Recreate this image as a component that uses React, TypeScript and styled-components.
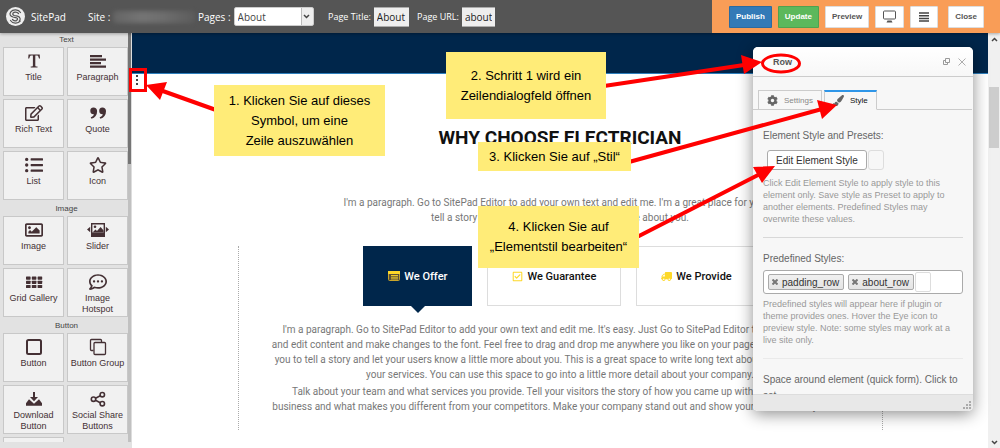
import React from "react";
import styled, { createGlobalStyle, css } from "styled-components";
import {
  FaRegEdit,
  FaListUl,
  FaRegStar,
  FaRegImage,
  FaRegCommentDots,
  FaCog,
  FaPaintBrush,
  FaRegCheckSquare,
  FaTruck,
} from "react-icons/fa";

const GlobalStyle = createGlobalStyle`
  *, *::before, *::after { box-sizing: border-box; }
  body { margin: 0; font-family: "Liberation Sans", Arial, sans-serif; }
  button, input, select { font: inherit; margin: 0; }
  h1, h2, h3, p, ul { margin: 0; padding: 0; font-weight: inherit; font-size: inherit; }
`;

const Shell = styled.div`
  position: relative;
  display: flex;
  flex-direction: column;
  height: 100vh;
  overflow: hidden;
  background: #fff;
`;

/* ---------- top bar ---------- */

const TopBar = styled.header`
  display: flex;
  flex: none;
  height: 33px;
  background: #555;
  color: #fff;
  font-family: "Open Sans", sans-serif;
  font-size: 10px;
  z-index: 1;
  box-shadow: 0 1px 3px rgba(0, 0, 0, 0.3);
`;

const Brand = styled.a`
  display: flex;
  align-items: center;
  gap: 6px;
  width: 88px;
  padding-left: 6px;
  color: inherit;
  text-decoration: none;
`;

const Group = styled.div<{ $width?: number }>`
  display: flex;
  align-items: center;
  gap: 3px;
  flex: none;
  width: ${(p) => (p.$width ? p.$width + "px" : "auto")};
`;

const Redacted = styled.span`
  width: 82px;
  height: 12px;
  border-radius: 4px;
  background: linear-gradient(90deg, #656565, #747474 35%, #6e6e6e 60%, #5c5c5c);
  filter: blur(2px);
`;

const PageSelect = styled.div`
  position: relative;
  display: flex;
  height: 19px;
  width: 80px;

  select {
    flex: 1;
    appearance: none;
    border: 1px solid #ccc;
    border-radius: 2px;
    background: linear-gradient(90deg, #fff 66px, #bbb 66px, #bbb 67px, #eee 67px);
    color: #444;
    padding: 0 3px;
  }
  svg {
    position: absolute;
    right: 4px;
    top: 7px;
    pointer-events: none;
  }
`;

const FieldLabel = styled.label`
  font-size: 9px;
`;

const TextField = styled.input<{ $width: number }>`
  width: ${(p) => p.$width}px;
  height: 20px;
  padding: 0 3px;
  border: 1px solid #aaa;
  border-width: 1px 0;
  background: #eee;
  color: #222;
`;

const Spacer = styled.div`
  flex: 1;
`;

const Actions = styled.div`
  display: flex;
  align-items: center;
  gap: 6px;
  padding: 0 16px 0 17px;
  background: #f99d57;
  font-family: "Liberation Sans", Arial, sans-serif;
`;

const ActionButton = styled.button<{ $bg?: string; $apart?: boolean }>`
  display: flex;
  align-items: center;
  justify-content: center;
  height: 22px;
  padding: 0 6px;
  border: 1px solid ${(p) => (p.$bg ? "rgba(0,0,0,0.12)" : "#ddd")};
  background: ${(p) => p.$bg || "#fff"};
  color: ${(p) => (p.$bg ? "#fff" : "#555")};
  border-radius: 1px;
  font-size: 8px;
  font-weight: bold;
  ${(p) =>
    p.$apart &&
    css`
      margin-left: 4px;
    `}
`;

/* ---------- sidebar ---------- */

const Body = styled.div`
  display: flex;
  flex: 1;
  min-height: 0;
`;

const Sidebar = styled.nav`
  display: flex;
  flex: none;
  width: 132px;
  padding-bottom: 6px;
  background: #e2e2e2;
`;

const Palette = styled.div`
  flex: 1;
  overflow: hidden;
`;

const Section = styled.section`
  padding-left: 3px;
`;

const SectionTitle = styled.h2<{ $first?: boolean }>`
  height: ${(p) => (p.$first ? 14 : 16)}px;
  line-height: ${(p) => (p.$first ? 14 : 18)}px;
  padding-left: 2px;
  text-align: center;
  font-size: 8px;
  color: #444;
`;

const Tiles = styled.div`
  display: grid;
  grid-template-columns: 1fr 1fr;
  gap: 3px;
`;

const Tile = styled.button`
  display: flex;
  flex-direction: column;
  align-items: center;
  height: 49px;
  padding: 4px 0 0;
  border: 1px solid #c8c8c8;
  background: #f1f1f1;
  color: #443034;
  font-size: 9px;
  line-height: 11px;
  white-space: pre-line;

  svg {
    width: 18px;
    height: 18px;
    margin-bottom: 2px;
    flex: none;
  }
`;

const ThinScroll = styled.div`
  flex: none;
  width: 4px;
  background: #c1c1c1;
  border-right: 1px solid #ddd;

  &::before {
    content: "";
    display: block;
    height: 131px;
    background: #757575;
  }
`;

/* ---------- canvas ---------- */

const Canvas = styled.main`
  flex: 1;
  min-width: 0;
  overflow: hidden;
  font-family: Roboto, sans-serif;
  font-size: 10px;
  line-height: 15px;
  color: #777;
  text-align: center;
`;

const Hero = styled.div`
  height: 41px;
  background: #00264b;
  border-bottom: 1px solid #2d7fbd;
`;

const Headline = styled.h1`
  padding-top: 52px;
  font-size: 19px;
  line-height: 24px;
  font-weight: bold;
  color: #111;
`;

const Intro = styled.p`
  padding: 45px 0 21px;
  white-space: pre-line;
`;

const RowFrame = styled.section`
  width: 645px;
  height: 184px;
  margin: 0 auto;
  border: dotted #aaa;
  border-width: 0 1px;
  white-space: pre;
`;

const OfferTabs = styled.div`
  display: flex;
  justify-content: center;
  gap: 15px;
  margin-bottom: 16px;
`;

const OfferTab = styled.button<{ $active?: boolean }>`
  position: relative;
  display: flex;
  align-items: center;
  justify-content: center;
  gap: 4px;
  height: 60px;
  padding: 0 24px;
  border: 1px solid ${(p) => (p.$active ? "#00264b" : "#ddd")};
  background: ${(p) => (p.$active ? "#00264b" : "#fff")};
  color: ${(p) => (p.$active ? "#fff" : "#111")};
  font-size: 11px;
  font-weight: 500;

  svg {
    color: #fdd829;
  }
  ${(p) =>
    p.$active &&
    css`
      &::after {
        content: "";
        position: absolute;
        top: 100%;
        left: 50%;
        margin-left: -8px;
        border: 8px solid transparent;
        border-top-color: #00264b;
        border-bottom: 0;
      }
    `}
`;

const FlippedTruck = styled(FaTruck)`
  transform: scaleX(-1);
`;

const Copy = styled.p`
  margin-bottom: 2px;
`;

const PageScroll = styled.div`
  display: flex;
  flex-direction: column;
  align-items: center;
  flex: none;
  width: 12px;
  padding: 4px 0 3px;
  background: #f0f0f0;
`;

const PageThumb = styled.div`
  width: 10px;
  height: 61px;
  margin: 45px 0 auto;
  background: #cdcdcd;
`;

/* ---------- dialog ---------- */

const DialogFrame = styled.section`
  position: absolute;
  top: 47px;
  right: 27px;
  width: 220px;
  border-radius: 5px;
  box-shadow: 0 3px 16px rgba(0, 0, 0, 0.45);
`;

const Dialog = styled.div`
  height: 364px;
  display: flex;
  flex-direction: column;
  overflow: hidden;
  border-radius: 5px;
  background: #f7f7f7;
  color: #666;
  font-size: 10px;
`;

const DialogHead = styled.header`
  display: flex;
  align-items: center;
  flex: none;
  gap: 8px;
  height: 30px;
  padding: 0 7px 0 20px;
  border-bottom: 1px solid #ccc;
  background: linear-gradient(#fff, #f7f7f7);

  h2 {
    flex: 1;
    font-size: 9px;
    font-weight: bold;
    color: #555;
  }
`;

const PlainButton = styled.button`
  display: flex;
  padding: 0;
  border: 0;
  background: none;
  color: #999;
`;

const DialogTabs = styled.div`
  display: flex;
  flex: none;
  gap: 2px;
  margin: 13px 1px 0 0;
  padding-left: 5px;
  border-bottom: 1px solid #ccc;
`;

const DialogTab = styled.button<{ $active?: boolean }>`
  display: flex;
  align-items: center;
  gap: 6px;
  height: 20px;
  margin-bottom: -1px;
  padding: 0 8px;
  border: 1px solid #ccc;
  border-top: ${(p) => (p.$active ? "2px solid #2f96e8" : "1px solid #ccc")};
  border-bottom-color: ${(p) => (p.$active ? "#f7f7f7" : "#ccc")};
  background: #f7f7f7;
  color: ${(p) => (p.$active ? "#111" : "#888")};
  font-size: 8px;
  white-space: nowrap;

  svg {
    color: #666;
  }
`;

const DialogBody = styled.div`
  flex: 1;
  min-height: 0;
  overflow: hidden;
  padding: 20px 10px 0;
`;

const Caption = styled.label`
  display: block;
  line-height: 12px;
`;

const LooseCaption = styled.p`
  line-height: 16px;
`;

const Help = styled.p<{ $tight?: boolean }>`
  padding: ${(p) => (p.$tight ? 4 : 7)}px 0 12px;
  border-bottom: 1px solid ${(p) => (p.$tight ? "#eaeaea" : "#d8d8d8")};
  margin-bottom: ${(p) => (p.$tight ? 13 : 15)}px;
  color: #999;
  font-size: 9px;
  line-height: 12px;
  white-space: pre;
`;

const StyleLine = styled.div`
  display: flex;
  gap: 1px;
  padding: 8px 0 0 4px;
`;

const EditButton = styled.button`
  height: 20px;
  padding: 0 8px;
  border: 1px solid #aaa;
  border-radius: 3px;
  background: #fff;
  color: #333;
  white-space: nowrap;
`;

const BlankBox = styled.span`
  width: 16px;
  height: 20px;
  border: 1px solid #ddd;
  border-radius: 3px;
`;

const TagField = styled.div`
  display: flex;
  align-items: center;
  height: 24px;
  margin-top: 5px;
  padding: 0 4px;
  border: 1px solid #aaa;
  border-radius: 3px;
  background: #fff;
`;

const Tag = styled.span`
  display: flex;
  align-items: center;
  gap: 4px;
  height: 16px;
  margin-right: 4px;
  padding: 0 4px 0 3px;
  border: 1px solid #aaa;
  border-radius: 2px;
  background: linear-gradient(#f0f0f0, #e4e4e4);
  color: #333;
`;

const TagInput = styled.input`
  width: 16px;
  height: 20px;
  margin-left: -3px;
  border: 1px solid #ddd;
  border-radius: 2px;
  background: #fff;
`;

const DialogFoot = styled.footer`
  display: flex;
  flex: none;
  justify-content: flex-end;
  height: 17px;
  padding: 6px 2px 0;
  border-top: 1px solid #ddd;
  background: #e8e8e8;
`;

/* ---------- annotations ---------- */

const Marks = styled.svg`
  position: absolute;
  top: 0;
  left: 0;
  pointer-events: none;
`;

const Note = styled.aside<{ $x: number; $y: number; $w: number; $h: number }>`
  position: absolute;
  left: ${(p) => p.$x}px;
  top: ${(p) => p.$y}px;
  width: ${(p) => p.$w}px;
  height: ${(p) => p.$h}px;
  display: flex;
  align-items: center;
  justify-content: center;
  background: #ffec78;
  color: #000;
  font-size: 13px;
  line-height: 20px;
  text-align: center;
  white-space: pre;
`;

/* ---------- icons ---------- */

const Icon = ({ children }: { children: React.ReactNode }) => (
  <svg viewBox="0 0 18 18" fill="currentColor" aria-hidden="true">
    {children}
  </svg>
);

const TitleIcon = () => (
  <Icon>
    <path d="M3.500 2.500h11.200l.3 4h-1l-.8-2.300c-.2-.4-.5-.6-1-.6h-1.900v9.900c0 .6.300.8.800.9l1.400.2v.9h-6.800v-.9l1.400-.2c.5-.1.8-.3.8-.9v-9.900h-1.900c-.5 0-.8.2-1 .6l-.8 2.300h-1z" />
  </Icon>
);
const ParagraphIcon = () => (
  <Icon>
    <path d="M1 3h12v2.200H1zM1 6.600h16v2.200H1zM1 10.100h11v2.200H1zM1 13.600h16v2.200H1z" />
  </Icon>
);
const QuoteIcon = () => (
  <Icon>
    <path d="M4.500 3.500a3.500 3.500 0 0 1 3.600 3.700c0 3.800-2 6.500-5.600 7.500l-.8-1.400c1.900-.7 3-1.700 3.200-3A3.400 3.400 0 0 1 4.500 3.500zM13.400 3.500A3.500 3.500 0 0 1 17 7.200c0 3.800-2 6.500-5.600 7.500l-.8-1.400c1.900-.7 3-1.700 3.200-3a3.400 3.400 0 0 1-.4-6.800z" />
  </Icon>
);

const WideGlyph = styled.svg`
  && {
    width: 22px;
  }
`;
const SliderIcon = () => (
  <WideGlyph viewBox="0 0 22 18" fill="currentColor" aria-hidden="true">
    <path fillRule="evenodd" d="M4 2h14v14H4zM5.400 3.400v8.200h11.200V3.400z" />
    <circle cx="8" cy="5.800" r="1.300" />
    <path d="M5.500 11.500l3-3 1.500 1.500 3.600-4 3 3.500v2zM3.200 5.800v5.400L0 8.500zM18.800 5.800v5.400L22 8.500z" />
  </WideGlyph>
);
const GridIcon = () => (
  <Icon>
    {[3.5, 7.7, 11.9].map((y) =>
      [1, 6.8, 12.6].map((x) => <rect key={x + "-" + y} x={x} y={y} width="4.600" height="3.200" rx="0.600" />)
    )}
  </Icon>
);
const SquareIcon = () => (
  <Icon>
    <rect x="2" y="2" width="14" height="14" rx="1.500" fill="none" stroke="currentColor" strokeWidth="2" />
  </Icon>
);
const SquaresIcon = () => (
  <Icon>
    <g fill="none" stroke="currentColor" strokeWidth="1.300">
      <path d="M4.500 12.500H2.500a1 1 0 0 1-1-1V2.500a1 1 0 0 1 1-1h9a1 1 0 0 1 1 1v1.500" />
      <rect x="5" y="4.500" width="11.500" height="12" rx="1" />
    </g>
  </Icon>
);
const DownloadIcon = () => (
  <Icon>
    <path d="M8 2h2v5h3L9 11.200 5 7h3z" />
    <path d="M4 9.300l5 4.500 5-4.500 3 4v2.500H1v-2.500z" />
  </Icon>
);
const ShareIcon = () => (
  <Icon>
    <g fill="none" stroke="currentColor" strokeWidth="1.600">
      <circle cx="4.500" cy="9.200" r="2.200" />
      <circle cx="13.300" cy="4.700" r="2.200" />
      <circle cx="13.300" cy="13.700" r="2.200" />
      <path d="M6.500 8.200l4.800-2.500M6.500 10.200l4.800 2.500" />
    </g>
  </Icon>
);

const BrandMark = () => (
  <svg width="19" height="19" viewBox="0 0 19 19" aria-hidden="true">
    <circle cx="9.500" cy="9.500" r="9.500" fill="#eee" />
    <g fill="none" stroke="#555" strokeWidth="1.200" strokeLinecap="round">
      <path d="M14.500 5.500C12.500 2.300 7 2 4.800 4.800 3 7.200 4.300 9.300 7 10l3.500.8c1.600.5 1.300 2.400-.3 2.500" />
      <path d="M12.500 6.500C11 4.700 8 4.700 7 6.200c-.7 1.200.1 2 1.300 2.300l3.200.7c3 .8 3.300 3.500 1.700 5" />
      <path d="M4.500 13.500c2 3.200 7.500 3.500 9.700.7M6.500 12.500c1 1 2.500 1.500 3.700 1.300" />
    </g>
  </svg>
);

const Chevron = ({ up }: { up?: boolean }) => (
  <svg width="7" height="5" viewBox="0 0 7 5" aria-hidden="true">
    <path d={up ? "M1 4l2.500-2.500L6 4" : "M1 1l2.500 2.500L6 1"} fill="none" stroke="#444" strokeWidth="1.500" />
  </svg>
);

const CardIcon = () => (
  <svg width="12" height="10" viewBox="0 0 12 10" aria-hidden="true">
    <rect x="0.500" y="0.500" width="11" height="9" rx="1" fill="#5a5038" stroke="#c9a52b" />
    <path d="M0 0h12v3H0z" fill="#fdd829" />
    <path d="M3 4.500h7M3 6.200h7M3 7.900h7" stroke="#fdd829" strokeWidth="0.900" />
  </svg>
);

const RemoveMark = () => (
  <svg width="6" height="6" viewBox="0 0 6 6" stroke="#777" strokeWidth="2" aria-hidden="true">
    <path d="M.5.5l5 5M5.500.5l-5 5" />
  </svg>
);

/* ---------- data ---------- */

const palette = [
  {
    title: "Text",
    items: [
      ["Title", TitleIcon],
      ["Paragraph", ParagraphIcon],
      ["Rich Text", FaRegEdit],
      ["Quote", QuoteIcon],
      ["List", FaListUl],
      ["Icon", FaRegStar],
    ],
  },
  {
    title: "Image",
    items: [
      ["Image", FaRegImage],
      ["Slider", SliderIcon],
      ["Grid Gallery", GridIcon],
      ["Image\nHotspot", FaRegCommentDots],
    ],
  },
  {
    title: "Button",
    items: [
      ["Button", SquareIcon],
      ["Button Group", SquaresIcon],
      ["Download\nButton", DownloadIcon],
      ["Social Share\nButtons", ShareIcon],
      ["", null],
    ],
  },
] as { title: string; items: [string, React.ComponentType | null][] }[];

export default function App() {
  return (
    <Shell>
      <GlobalStyle />
      <TopBar>
        <Brand href="#">
          <BrandMark />
          SitePad
        </Brand>
        <Group $width={110}>
          Site :<Redacted />
        </Group>
        <Group $width={130}>
          <label htmlFor="pages">Pages :</label>
          <PageSelect>
            <select id="pages" defaultValue="About">
              <option>About</option>
            </select>
            <Chevron />
          </PageSelect>
        </Group>
        <Group $width={89}>
          <FieldLabel htmlFor="page-title">Page Title:</FieldLabel>
          <TextField id="page-title" $width={35} defaultValue="About" />
        </Group>
        <Group>
          <FieldLabel htmlFor="page-url">Page URL:</FieldLabel>
          <TextField id="page-url" $width={33} defaultValue="about" />
        </Group>
        <Spacer />
        <Actions>
          <ActionButton $bg="#337ab7">Publish</ActionButton>
          <ActionButton $bg="#5cb85c">Update</ActionButton>
          <ActionButton>Preview</ActionButton>
          <ActionButton aria-label="Screen size">
            <svg width="15" height="13" viewBox="0 0 15 13" aria-hidden="true">
              <rect x="1.500" y="1" width="12" height="8" rx="1" fill="none" stroke="#555" />
              <path d="M5.500 10.500h4l1 2h-6z" fill="#555" />
            </svg>
          </ActionButton>
          <ActionButton aria-label="Menu">
            <svg width="14" height="10" viewBox="0 0 14 10" aria-hidden="true">
              <path d="M2 1h10M2 3.700h10M2 6.400h10M2 9.100h10" stroke="#444" strokeWidth="1.500" />
            </svg>
          </ActionButton>
          <ActionButton $apart>Close</ActionButton>
        </Actions>
      </TopBar>

      <Body>
        <Sidebar>
          <Palette>
            {palette.map((s, i) => (
              <Section key={s.title}>
                <SectionTitle $first={i === 0}>{s.title}</SectionTitle>
                <Tiles>
                  {s.items.map(([label, Glyph]) => (
                    <Tile key={label} aria-label={label || "More"}>
                      {Glyph && <Glyph />}
                      {label}
                    </Tile>
                  ))}
                </Tiles>
              </Section>
            ))}
          </Palette>
          <ThinScroll />
        </Sidebar>

        <Canvas>
          <Hero />
          <Headline>WHY CHOOSE ELECTRICIAN</Headline>
          <Intro>
            {"I'm a paragraph. Go to SitePad Editor to add your own text and edit me. I'm a great place for you to\ntell a story and let your users know a little more about you."}
          </Intro>
          <RowFrame>
            <OfferTabs>
              <OfferTab $active>
                <CardIcon />
                We Offer
              </OfferTab>
              <OfferTab>
                <FaRegCheckSquare />
                We Guarantee
              </OfferTab>
              <OfferTab>
                <FlippedTruck />
                We Provide
              </OfferTab>
            </OfferTabs>
            <Copy>
              {"I'm a paragraph. Go to SitePad Editor to add your own text and edit me. It's easy. Just Go to SitePad Editor to add your content\nand edit content and make changes to the font. Feel free to drag and drop me anywhere you like on your page. I'm a great place for\nyou to tell a story and let your users know a little more about you. This is a great space to write long text about your company and\nyour services. You can use this space to go into a little more detail about your company."}
            </Copy>
            <Copy>
              {"Talk about your team and what services you provide. Tell your visitors the story of how you came up with the idea for your\nbusiness and what makes you different from your competitors. Make your company stand out and show your visitors who you are."}
            </Copy>
          </RowFrame>
        </Canvas>

        <PageScroll>
          <Chevron up />
          <PageThumb />
          <Chevron />
        </PageScroll>
      </Body>

      <DialogFrame aria-label="Row">
        <Dialog>
          <DialogHead>
            <h2>Row</h2>
            <PlainButton aria-label="Restore">
              <svg width="7" height="7" viewBox="0 0 7 7" fill="none" stroke="currentColor" aria-hidden="true">
                <path d="M2.500.5h4v4h-4zM2.500 2.500h-2v4h4v-2" />
              </svg>
            </PlainButton>
            <PlainButton aria-label="Close">
              <svg width="8" height="8" viewBox="0 0 8 8" stroke="currentColor" strokeWidth="0.800" aria-hidden="true">
                <path d="M.5.5l7 7M7.500.5l-7 7" />
              </svg>
            </PlainButton>
          </DialogHead>
          <DialogTabs>
            <DialogTab>
              <FaCog size={11} />
              Settings
            </DialogTab>
            <DialogTab $active>
              <FaPaintBrush size={11} />
              Style
            </DialogTab>
          </DialogTabs>
          <DialogBody>
            <Caption as="p">Element Style and Presets:</Caption>
            <StyleLine>
              <EditButton>Edit Element Style</EditButton>
              <BlankBox />
            </StyleLine>
            <Help>
              {"Click Edit Element Style to apply style to this\nelement only. Save style as Preset to apply to\nanother elements. Predefined Styles may\noverwrite these values."}
            </Help>
            <Caption htmlFor="styles">Predefined Styles:</Caption>
            <TagField>
              <Tag>
                <RemoveMark />
                padding_row
              </Tag>
              <Tag>
                <RemoveMark />
                about_row
              </Tag>
              <TagInput id="styles" />
            </TagField>
            <Help $tight>
              {"Predefined styles will appear here if plugin or\ntheme provides ones. Hover the Eye icon to\npreview style. Note: some styles may work at a\nlive site only."}
            </Help>
            <LooseCaption>
              Space around element (quick form). Click to
              <br />
              set
            </LooseCaption>
          </DialogBody>
          <DialogFoot>
            <svg width="8" height="8" viewBox="0 0 8 8" fill="#aaa" aria-hidden="true">
              <path d="M6 0h2v2H6zM6 3h2v2H6zM6 6h2v2H6zM3 3h2v2H3zM3 6h2v2H3zM0 6h2v2H0z" />
            </svg>
          </DialogFoot>
        </Dialog>
      </DialogFrame>

      <Marks width="1000" height="448" viewBox="0 0 1000 448" aria-hidden="true">
        <g fill="#444">
          <rect x="136" y="75" width="2" height="2" />
          <rect x="136" y="79" width="2" height="2" />
          <rect x="136" y="83" width="2" height="2" />
        </g>
        <g fill="none" stroke="red" strokeWidth="3">
          <rect x="130.500" y="69.500" width="15" height="21" />
          <ellipse cx="781" cy="63.500" rx="18.500" ry="8.500" />
          <path strokeWidth="4" d="M216 110L160 90M604 86L744 65M629 162L822 109M637 237L760 174" />
        </g>
        <g fill="red">
          <path d="M146 85l21-3-7 18zM762 62l-21-7 3 19zM837 105l-20-5 5 19zM775 166l-22 1 9 16z" />
        </g>
      </Marks>

      <Note $x={214} $y={85} $w={171} $h={71}>
        {"1. Klicken Sie auf dieses\nSymbol, um eine\nZeile auszuwählen"}
      </Note>
      <Note $x={446} $y={52} $w={160} $h={67}>
        {"2. Schritt 1 wird ein\nZeilendialogfeld öffnen"}
      </Note>
      <Note $x={478} $y={142} $w={153} $h={29}>
        {"3. Klicken Sie auf „Stil“"}
      </Note>
      <Note $x={478} $y={206} $w={161} $h={62}>
        {"4. Klicken Sie auf\n„Elementstil bearbeiten“"}
      </Note>
    </Shell>
  );
}
